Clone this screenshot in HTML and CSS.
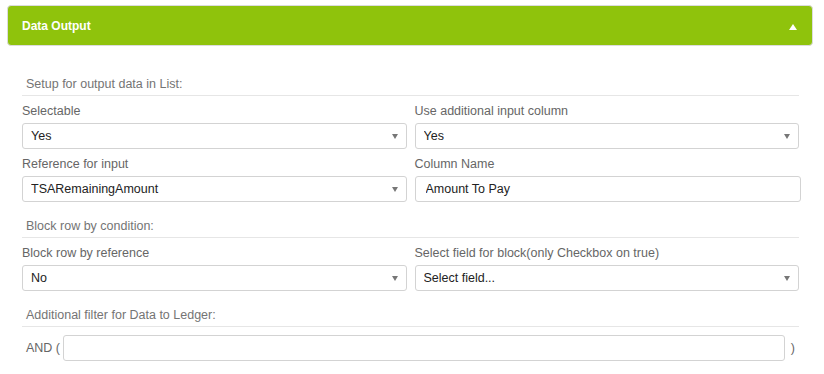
FILE: index.html
```html
<!DOCTYPE html>
<html lang="en">
<head>
  <meta charset="UTF-8">
  <meta name="viewport" content="width=device-width, initial-scale=1.0">
  <title>Data Output</title>
  <link rel="stylesheet" href="styles.css">
</head>
<body>
  <div class="panel">
    <div class="panel-header">
      <span class="panel-title">Data Output</span>
      <span class="panel-toggle"></span>
    </div>

    <div class="panel-body">
      <div class="section-title">Setup for output data in List:</div>
      <div class="form-row">
        <div class="field">
          <label>Selectable</label>
          <div class="select-wrap">
            <select><option>Yes</option><option>No</option></select>
          </div>
        </div>
        <div class="field">
          <label>Use additional input column</label>
          <div class="select-wrap">
            <select><option>Yes</option><option>No</option></select>
          </div>
        </div>
      </div>
      <div class="form-row">
        <div class="field">
          <label>Reference for input</label>
          <div class="select-wrap">
            <select><option>TSARemainingAmount</option></select>
          </div>
        </div>
        <div class="field">
          <label>Column Name</label>
          <input type="text" class="text-input wide" value="Amount To Pay">
        </div>
      </div>

      <div class="section-title">Block row by condition:</div>
      <div class="form-row">
        <div class="field">
          <label>Block row by reference</label>
          <div class="select-wrap">
            <select><option>No</option><option>Yes</option></select>
          </div>
        </div>
        <div class="field">
          <label>Select field for block(only Checkbox on true)</label>
          <div class="select-wrap">
            <select><option>Select field...</option></select>
          </div>
        </div>
      </div>

      <div class="section-title">Additional filter for Data to Ledger:</div>
      <div class="filter-row">
        <span class="filter-text">AND (</span>
        <input type="text" class="text-input">
        <span class="filter-text close">)</span>
      </div>
    </div>
  </div>
</body>
</html>
```

FILE: styles.css
```css
body {
  margin: 0;
  padding: 5px 11px 0 7px;
  font-family: "Liberation Sans", Arial, sans-serif;
  font-size: 12.5px;
  color: #666;
  background: #fff;
}

.panel-header {
  height: 41px;
  box-sizing: border-box;
  background: #8fc30c;
  border: 1px solid #dcdcdc;
  border-radius: 4px;
  display: flex;
  align-items: center;
  justify-content: space-between;
  padding: 0 15px 0 14px;
}

.panel-title {
  color: #fff;
  font-weight: bold;
  font-size: 12px;
}

.panel-toggle {
  width: 0;
  height: 0;
  border-left: 4px solid transparent;
  border-right: 4px solid transparent;
  border-bottom: 6px solid #fff;
  margin-top: 2px;
}

.panel-body {
  padding: 30px 14px 0 15px;
}

.section-title {
  line-height: 16px;
  padding: 0 4px 3px;
  border-bottom: 1px solid #e6e6e6;
  color: #747474;
  margin-bottom: 7px;
}

.form-row {
  display: grid;
  grid-template-columns: 1fr 1fr;
  gap: 8px;
  margin-bottom: 7px;
}

.form-row:has(+ .section-title) {
  margin-bottom: 16px;
}

.field label {
  display: block;
  line-height: 16px;
  margin-bottom: 4px;
}

.select-wrap {
  position: relative;
}

.select-wrap::after {
  content: "";
  position: absolute;
  right: 9px;
  top: 11px;
  border-left: 3.5px solid transparent;
  border-right: 3.5px solid transparent;
  border-top: 5px solid #777;
  pointer-events: none;
}

select,
.text-input {
  display: block;
  width: 100%;
  height: 26px;
  box-sizing: border-box;
  border: 1px solid #d3d3d3;
  border-radius: 3px;
  background: #fff;
  font-family: inherit;
  font-size: 12.5px;
  color: #222;
  outline: none;
}

select {
  appearance: none;
  padding: 0 20px 0 8px;
}

.text-input {
  padding: 0 10px;
}

.text-input.wide {
  width: calc(100% + 2px);
}

.filter-row {
  display: flex;
  align-items: center;
  gap: 3px;
  margin-top: 8px;
  padding-left: 4px;
  padding-right: 4px;
}

.filter-text {
  color: #666;
}

.filter-text.close {
  margin-left: 3px;
}

.filter-row .text-input {
  flex: 1;
}
```
